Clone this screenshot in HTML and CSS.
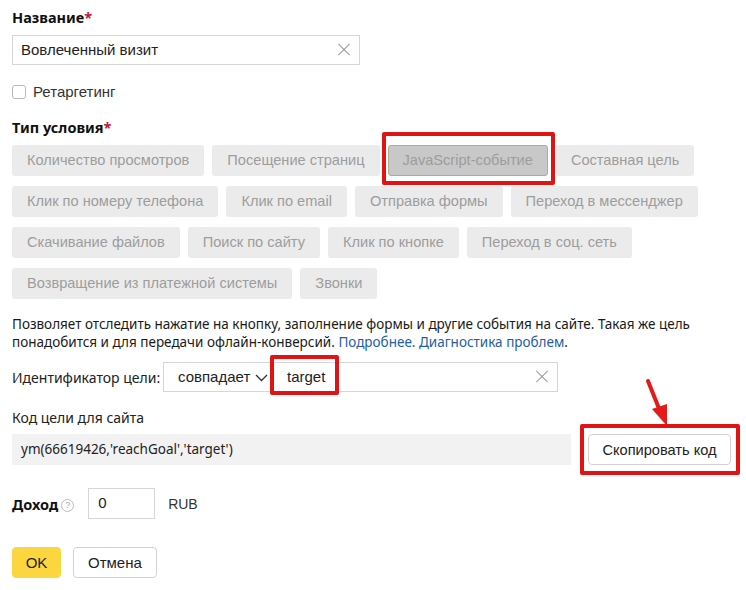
FILE: index.html
```html
<!DOCTYPE html>
<html lang="ru">
<head>
    <meta charset="UTF-8">
    <meta name="viewport" content="width=device-width, initial-scale=1.0">
    <title>Цель</title>
    <link rel="stylesheet" href="styles.css">
</head>
<body>
    <div class="form">
        <div class="label">Название<span class="req">*</span></div>
        <div class="text-input name-input">
            <span class="value">Вовлеченный визит</span>
            <span class="clear"></span>
        </div>

        <label class="check">
            <span class="box"></span>
            <span>Ретаргетинг</span>
        </label>

        <div class="label type-label">Тип условия<span class="req">*</span></div>
        <div class="chips">
            <div class="chip">Количество просмотров</div>
            <div class="chip">Посещение страниц</div>
            <div class="chip active">JavaScript-событие<span class="mark mark-chip"></span></div>
            <div class="chip">Составная цель</div>
            <div class="chip">Клик по номеру телефона</div>
            <div class="chip">Клик по email</div>
            <div class="chip">Отправка формы</div>
            <div class="chip">Переход в мессенджер</div>
            <div class="chip">Скачивание файлов</div>
            <div class="chip">Поиск по сайту</div>
            <div class="chip">Клик по кнопке</div>
            <div class="chip">Переход в соц. сеть</div>
            <div class="chip">Возвращение из платежной системы</div>
            <div class="chip">Звонки</div>
        </div>

        <p class="hint">Позволяет отследить нажатие на кнопку, заполнение формы и другие события на сайте. Такая же цель понадобится и для передачи офлайн-конверсий. <a href="#">Подробнее.</a> <a href="#">Диагностика проблем</a>.</p>

        <div class="ident">
            <span class="ident-label">Идентификатор цели:</span>
            <div class="select">совпадает
                <svg class="chevron" width="13" height="8" viewBox="0 0 13 8"><path d="M1 1l5.5 5.5L12 1" fill="none" stroke="#333" stroke-width="1.3"/></svg>
            </div>
            <div class="text-input target-input">
                <span class="value">target</span>
                <span class="clear"></span>
                <span class="mark mark-target"></span>
            </div>
        </div>

        <div class="code-label">Код цели для сайта</div>
        <div class="code-row">
            <div class="code">ym(66619426,'reachGoal','target')</div>
            <div class="copy-wrap">
                <button class="btn copy">Скопировать код</button>
                <span class="mark mark-copy"></span>
                <svg class="arrow" width="40" height="50" viewBox="0 0 40 50">
                    <path d="M6 2L18 32" stroke="#e31b1b" stroke-width="4" stroke-linecap="round"/>
                    <path d="M10 30L25 25L25 47Z" fill="#e31b1b"/>
                </svg>
            </div>
        </div>

        <div class="income">
            <span class="label income-label">Доход</span>
            <span class="help">?</span>
            <div class="text-input income-input"><span class="value">0</span></div>
            <span class="currency">RUB</span>
        </div>

        <div class="actions">
            <button class="btn ok">OK</button>
            <button class="btn">Отмена</button>
        </div>
    </div>
</body>
</html>
```

FILE: styles.css
```css
body{
    margin:0;
    padding:0;
    background:#fff;
    color:#222;
    font-family:"Liberation Sans", Arial, sans-serif;
}
.form{
    padding:8px 12px 0 12px;
}
.label{
    font-family:"Noto Sans", sans-serif;
    font-weight:700;
    font-size:14.5px;
    line-height:18px;
    color:#111;
}
.req{
    color:#c3163b;
}
.text-input{
    position:relative;
    box-sizing:border-box;
    height:30px;
    border:1px solid #d6d6d6;
    background:#fff;
    font-size:15px;
    line-height:28px;
    padding-left:8px;
}
.name-input{
    width:348px;
    margin-top:9px;
}
.clear{
    position:absolute;
    right:9px;
    top:8px;
    width:12px;
    height:12px;
}
.clear::before,
.clear::after{
    content:"";
    position:absolute;
    left:-2px;
    top:5px;
    width:16px;
    height:1px;
    background:#9a9a9a;
    transform:rotate(45deg);
}
.clear::after{
    transform:rotate(-45deg);
}
.check{
    display:flex;
    align-items:center;
    gap:7px;
    margin-top:18px;
    font-size:15px;
    color:#333;
}
.check .box{
    box-sizing:border-box;
    width:14px;
    height:14px;
    border:1px solid #b9b9b9;
    border-radius:3px;
}
.type-label{
    margin-top:18px;
}
.chips{
    display:flex;
    flex-wrap:wrap;
    gap:10px 8px;
    margin-top:9px;
    width:722px;
}
.chip{
    position:relative;
    height:31px;
    line-height:31px;
    padding:0 15px;
    background:#ebebeb;
    color:#9d9d9d;
    font-size:14.6px;
    border-radius:3px;
    box-sizing:border-box;
    white-space:nowrap;
}
.chip.active{
    background:#c8c8c8;
    border:1px solid #b4a98c;
    line-height:29px;
    padding:0 14px;
}
.mark{
    position:absolute;
    border:4px solid #e01414;
    border-radius:2px;
    pointer-events:none;
}
.mark-chip{
    left:-7px;
    right:-8px;
    top:-14px;
    bottom:-10px;
}
.hint{
    margin:16px 0 0 0;
    font-family:"Noto Sans", sans-serif;
    font-size:13.5px;
    line-height:18px;
    color:#1a1a1a;
    width:720px;
}
.hint a{
    color:#1e5ea8;
    text-decoration:none;
}
.ident{
    display:flex;
    align-items:center;
    margin-top:11px;
}
.ident-label{
    font-family:"Noto Sans", sans-serif;
    font-size:14px;
    width:151px;
}
.select{
    box-sizing:border-box;
    height:30px;
    width:110px;
    border:1px solid #d6d6d6;
    border-right:none;
    font-size:15px;
    line-height:28px;
    padding-left:14px;
    display:flex;
    align-items:center;
    gap:5px;
}
.chevron{
    margin-top:2px;
}
.target-input{
    width:285px;
    padding-left:13px;
}
.mark-target{
    left:-4px;
    top:-8px;
    width:61px;
    height:32px;
}
.code-label{
    margin-top:17px;
    font-family:"Noto Sans", sans-serif;
    font-size:14px;
    line-height:18px;
}
.code-row{
    display:flex;
    align-items:center;
    margin-top:7px;
}
.code{
    width:559px;
    height:31px;
    line-height:31px;
    background:#f2f2f2;
    padding-left:9px;
    box-sizing:border-box;
    font-family:"Noto Sans", sans-serif;
    font-size:13.5px;
    color:#222;
}
.copy-wrap{
    position:relative;
    margin-left:17px;
}
.btn{
    box-sizing:border-box;
    height:31px;
    padding:0 14px;
    background:#fff;
    border:1px solid #d2d2d2;
    border-radius:4px;
    font-family:"Liberation Sans", Arial, sans-serif;
    font-size:15px;
    color:#222;
    white-space:nowrap;
}
.copy{
    width:143px;
    padding:0;
    font-size:14.6px;
    display:block;
}
.mark-copy{
    left:-8px;
    right:-9px;
    top:-10px;
    bottom:-10px;
}
.arrow{
    position:absolute;
    left:54px;
    top:-55px;
}
.income{
    display:flex;
    align-items:center;
    margin-top:23px;
}
.income-label{
    font-size:14.5px;
}
.help{
    box-sizing:border-box;
    width:13px;
    height:13px;
    margin-left:3px;
    margin-top:4px;
    border:1px solid #bbb;
    border-radius:50%;
    color:#aaa;
    font-size:9px;
    line-height:11px;
    text-align:center;
}
.income-input{
    width:67px;
    height:31px;
    margin-left:14px;
    padding-left:9px;
}
.currency{
    margin-left:13px;
    font-size:14px;
    color:#333;
}
.actions{
    display:flex;
    gap:12px;
    margin-top:28px;
}
.ok{
    background:#fcd63f;
    border-color:#fcd63f;
    width:49px;
    padding:0;
}
```
